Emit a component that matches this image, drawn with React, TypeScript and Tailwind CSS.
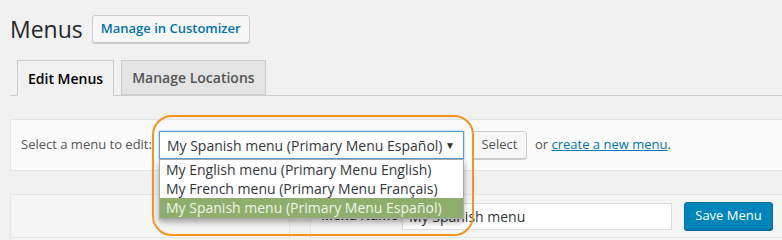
import React from "react";

const options = [
  "My English menu (Primary Menu English)",
  "My French menu (Primary Menu Français)",
  "My Spanish menu (Primary Menu Español)",
];

export default function App() {
  const selected = 2;

  return (
    <div
      className="relative w-[782px] h-[240px] overflow-hidden bg-[#f1f1f1] text-[#444]"
      style={{ fontFamily: '"Open Sans", "Noto Sans", sans-serif' }}
    >
      {/* page title */}
      <div className="flex items-center pl-[10px] pt-[15px] h-[43px]">
        <h1 className="text-[23px] leading-[28px] text-[#23282d] font-normal">Menus</h1>
        <button className="ml-[9px] h-[28px] px-[8px] border border-[#ccc] rounded-[3px] bg-[#f7f7f7] text-[13px] font-semibold text-[#0073aa] shadow-[0_1px_0_#ccc]">
          Manage in Customizer
        </button>
      </div>

      {/* tabs */}
      <div className="mt-[17px] ml-[10px] flex items-end gap-[7px] pl-[7px] border-b border-[#ccc] h-[36px]">
        <div className="h-[36px] -mb-px px-[10px] flex items-center border border-[#ccc] border-b-[#f1f1f1] bg-[#f1f1f1] text-[14px] font-semibold text-black">
          Edit Menus
        </div>
        <div className="h-[35px] px-[10px] flex items-center border border-[#ccc] bg-[#e4e4e4] text-[14px] font-semibold text-[#555]">
          Manage Locations
        </div>
      </div>

      {/* select menu panel */}
      <div className="mt-[23px] ml-[10px] w-[800px] h-[52px] flex items-center pl-[10px] border border-[#e5e5e5] bg-[#fbfbfb] text-[13px]">
        <span className="text-[#555] shrink-0">Select a menu to edit:</span>
        <div className="ml-[7px] shrink-0 w-[305px] h-[28px] flex items-center justify-between pl-[7px] pr-[8px] border border-[#5b9dd9] bg-white text-[14px] text-[#32373c] shadow-[0_0_2px_rgba(30,140,190,0.6)]">
          <span>{options[selected]}</span>
          <span className="text-[10px] text-[#333]">▼</span>
        </div>
        <button className="ml-[8px] shrink-0 h-[28px] w-[55px] border border-[#ccc] rounded-[3px] bg-[#f7f7f7] text-[13px] text-[#555] shadow-[0_1px_0_#ccc]">
          Select
        </button>
        <span className="ml-[8px] shrink-0 text-[#555]">
          or <span className="text-[#0073aa] underline">create a new menu</span>.
        </span>
      </div>

      {/* lower columns */}
      <div className="mt-[23px] ml-[10px] flex gap-[20px]">
        <div className="shrink-0 w-[280px] h-[60px] border border-[#e5e5e5] bg-[#f5f5f5]">
          <div className="h-[43px] border-b border-[#e5e5e5]" />
        </div>
        <div className="shrink-0 w-[500px] h-[60px] border border-[#e5e5e5] bg-[#f5f5f5]">
          <div className="h-[43px] flex items-center pl-[10px] border-b border-[#e5e5e5]">
            <span className="shrink-0 w-[81px] text-[13px] font-semibold text-[#23282d]">Menu Name</span>
            <div className="shrink-0 w-[270px] h-[27px] flex items-center px-[6px] border border-[#ddd] bg-white text-[14px] text-[#32373c]">
              My Spanish menu
            </div>
            <button className="shrink-0 ml-[12px] h-[28px] w-[89px] rounded-[3px] border border-[#0073aa] bg-[#0085ba] text-[13px] text-white shadow-[0_1px_0_#006799]">
              Save Menu
            </button>
          </div>
        </div>
      </div>

      {/* open dropdown list */}
      <div className="absolute left-[159px] top-[159px] w-[305px] bg-white border border-[#aaa] shadow-[0_3px_6px_rgba(0,0,0,0.35)] text-[14px]">
        {options.map((o, i) => (
          <div
            key={o}
            className={
              i === selected
                ? "h-[20px] leading-[20px] pl-[6px] bg-[#8fae6d] text-[#eef4e6]"
                : "h-[19px] leading-[19px] pl-[6px] text-[#32373c]"
            }
          >
            {o}
          </div>
        ))}
      </div>

      {/* orange highlight ring */}
      <div className="absolute left-[152px] top-[115px] w-[322px] h-[121px] rounded-[20px] border-2 border-[#f7941d] pointer-events-none" />
    </div>
  );
}
